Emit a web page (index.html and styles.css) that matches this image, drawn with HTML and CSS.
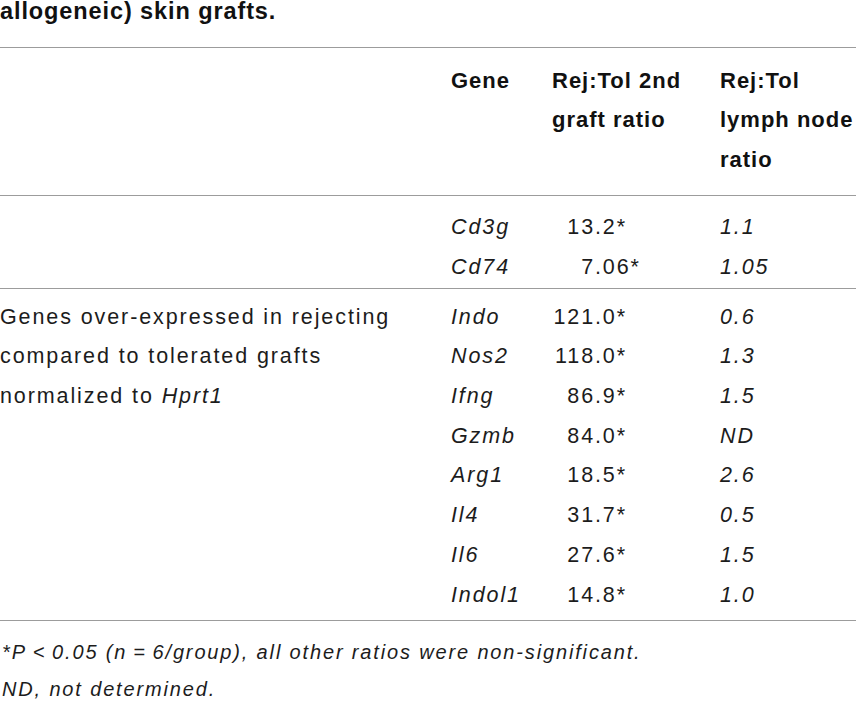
FILE: index.html
```html
<!DOCTYPE html>
<html lang="en">
<head>
<meta charset="utf-8">
<title>Table</title>
<link rel="stylesheet" href="styles.css">
</head>
<body>
<div class="page">
  <p class="caption">allogeneic) skin grafts.</p>
  <table class="data">
    <colgroup>
      <col class="c-desc">
      <col class="c-gene">
      <col class="c-graft">
      <col class="c-node">
    </colgroup>
    <thead>
      <tr>
        <th></th>
        <th>Gene</th>
        <th>Rej:Tol 2nd<br>graft ratio</th>
        <th>Rej:Tol<br>lymph node<br>ratio</th>
      </tr>
    </thead>
    <tbody class="group g1">
      <tr class="first">
        <td rowspan="2"></td>
        <td class="gene">Cd3g</td>
        <td class="num"><span class="int">13</span>.2*</td>
        <td class="val">1.1</td>
      </tr>
      <tr class="last">
        <td class="gene">Cd74</td>
        <td class="num"><span class="int">7</span>.06*</td>
        <td class="val">1.05</td>
      </tr>
    </tbody>
    <tbody class="group g2">
      <tr class="first">
        <td rowspan="8" class="desc">Genes over-expressed in rejecting compared to tolerated grafts normalized to <i>Hprt1</i></td>
        <td class="gene">Indo</td>
        <td class="num"><span class="int">121</span>.0*</td>
        <td class="val">0.6</td>
      </tr>
      <tr>
        <td class="gene">Nos2</td>
        <td class="num"><span class="int">118</span>.0*</td>
        <td class="val">1.3</td>
      </tr>
      <tr>
        <td class="gene">Ifng</td>
        <td class="num"><span class="int">86</span>.9*</td>
        <td class="val">1.5</td>
      </tr>
      <tr>
        <td class="gene">Gzmb</td>
        <td class="num"><span class="int">84</span>.0*</td>
        <td class="val">ND</td>
      </tr>
      <tr>
        <td class="gene">Arg1</td>
        <td class="num"><span class="int">18</span>.5*</td>
        <td class="val">2.6</td>
      </tr>
      <tr>
        <td class="gene">Il4</td>
        <td class="num"><span class="int">31</span>.7*</td>
        <td class="val">0.5</td>
      </tr>
      <tr>
        <td class="gene">Il6</td>
        <td class="num"><span class="int">27</span>.6*</td>
        <td class="val">1.5</td>
      </tr>
      <tr class="last">
        <td class="gene">Indol1</td>
        <td class="num"><span class="int">14</span>.8*</td>
        <td class="val">1.0</td>
      </tr>
    </tbody>
  </table>
  <div class="notes">
    <p>*P&thinsp;&lt;&thinsp;0.05 (n&thinsp;=&thinsp;6/group), all other ratios were non-significant.</p>
    <p>ND, not determined.</p>
  </div>
</div>
</body>
</html>
```

FILE: styles.css
```css
html, body {
  margin: 0;
  padding: 0;
  background: #ffffff;
}

body {
  font-family: "Liberation Sans", Arial, sans-serif;
  color: #1c1c1c;
}

.page {
  width: 856px;
}

.caption {
  margin: 0 0 25px 0;
  font-size: 23.5px;
  line-height: 22px;
  font-weight: bold;
  letter-spacing: 0.9px;
  color: #111;
}

.data {
  width: 856px;
  border-collapse: collapse;
  table-layout: fixed;
  border-top: 1px solid #9c9c9c;
}

.c-desc { width: 451px; }
.c-gene { width: 101px; }
.c-graft { width: 168px; }
.c-node { width: 136px; }

.data th {
  text-align: left;
  vertical-align: top;
  font-weight: bold;
  font-size: 22px;
  line-height: 39.5px;
  letter-spacing: 1px;
  color: #111;
  padding: 12.5px 0 15.5px 0;
  border-bottom: 1px solid #9c9c9c;
}

.data td {
  padding: 0;
  vertical-align: top;
  font-size: 21.5px;
  line-height: 39.7px;
  letter-spacing: 1.9px;
  white-space: nowrap;
}

.group {
  border-bottom: 1px solid #9c9c9c;
}

.g1 .first td { padding-top: 12.7px; }
.g1 .last td { padding-bottom: 0.8px; }
.g2 .first td { padding-top: 8.2px; }
.g2 .last td { padding-bottom: 4.3px; }

.data td.desc {
  white-space: normal;
  padding-right: 30px;
}

.gene,
.val {
  font-style: italic;
}

.num .int {
  display: inline-block;
  width: 43px;
  text-align: right;
}

.notes {
  padding-top: 13px;
  font-style: italic;
  font-size: 20px;
  line-height: 37.5px;
  letter-spacing: 1.85px;
}

.notes p {
  margin: 0;
  padding-left: 2px;
}
```
